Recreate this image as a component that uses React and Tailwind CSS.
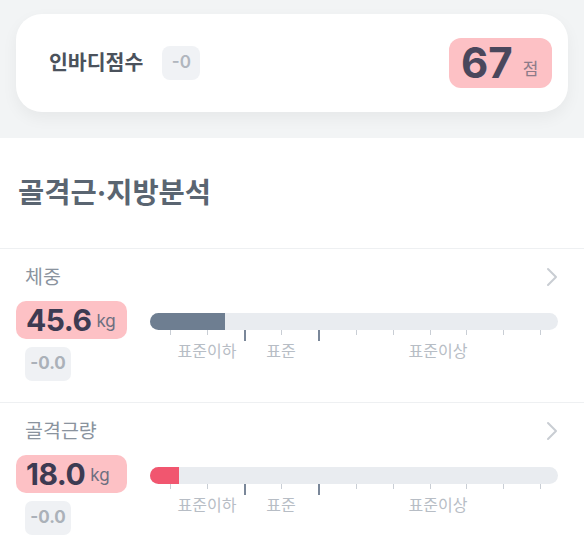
import React from "react";

const rows = [
  { label: "체중", value: "45.6", fill: "w-[75px] bg-[#6e7e91]" },
  { label: "골격근량", value: "18.0", fill: "w-[29px] bg-[#f1566f]" },
];

const ticks = [0, 1, 2, 3, 4, 5, 6, 7, 8, 9, 10];

function Chevron() {
  return (
    <svg width="14" height="20" viewBox="0 0 14 20" fill="none">
      <polyline points="3,2 11,10 3,18" stroke="#c9cdd3" strokeWidth="2" strokeLinecap="round" strokeLinejoin="round" />
    </svg>
  );
}

function Gauge({ fill }) {
  return (
    <div className="ml-[23px] mt-[12px] w-[408px]">
      <div className="h-[17px] rounded-full bg-[#e9ecf0] overflow-hidden">
        <div className={`h-full ${fill}`} />
      </div>
      <div className="flex items-start pl-[20px] gap-[35.8px] h-[11px]">
        {ticks.map((t) =>
          t === 2 || t === 4 ? (
            <div key={t} className="w-[2px] h-[11px] bg-[#7a8799]" />
          ) : (
            <div key={t} className="w-px h-[5px] bg-[#c9ced5]" />
          )
        )}
      </div>
      <div className="flex pl-[20px] text-[16px] leading-[20px] text-[#b7bdc5]">
        <div className="w-[74px] text-center">표준이하</div>
        <div className="w-[74px] text-center">표준</div>
        <div className="flex-1 text-center">표준이상</div>
      </div>
    </div>
  );
}

function Row({ label, value, fill }) {
  return (
    <div className="h-[154px] border-b border-[#eef0f2] px-4 pt-[16px]">
      <div className="flex items-center justify-between pr-[9px]">
        <span className="ml-[9px] text-[19.5px] leading-[24px] text-[#8a939e]">{label}</span>
        <Chevron />
      </div>
      <div className="flex mt-[12px]">
        <div className="w-[111px]">
          <div className="h-[38px] rounded-[10px] bg-[#fdc1c5] px-[10px] flex items-center">
            <span className="text-[30px] font-bold text-[#3d3b52] tracking-[-0.5px]">{value}</span>
            <span className="ml-[5px] mt-[4px] text-[17px] text-[#6d6f80]">kg</span>
          </div>
          <div className="ml-[9px] mt-[8px] w-[46px] h-[34px] rounded-[7px] bg-[#eff1f4] flex items-center justify-center text-[17px] font-bold text-[#abb1b9]">
            -0.0
          </div>
        </div>
        <Gauge fill={fill} />
      </div>
    </div>
  );
}

export default function App() {
  return (
    <div className="w-[584px] h-[548px] overflow-hidden bg-white font-['Inter','Noto_Sans_CJK_KR',sans-serif]">
      <div className="bg-[#f2f4f5] px-4 pt-[14px] pb-[26px]">
        <div className="h-[98px] rounded-[26px] bg-white shadow-[0_6px_16px_rgba(0,0,0,0.05)] flex items-center pl-[33px] pr-4">
          <span className="text-[20.5px] font-semibold text-[#4b525c]">인바디점수</span>
          <span className="ml-[19px] w-[38px] h-[34px] rounded-[8px] bg-[#f0f2f5] flex items-center justify-center text-[17px] font-semibold text-[#b0b6be]">
            -0
          </span>
          <div className="ml-auto w-[103px] h-[50px] rounded-[12px] bg-[#fdc1c5] flex items-center pl-[12px]">
            <span className="text-[42px] font-bold text-[#4a475c] leading-none">67</span>
            <span className="ml-[10px] mt-[14px] text-[17px] text-[#8c7b89]">점</span>
          </div>
        </div>
      </div>
      <div className="h-[111px] border-b border-[#eef0f2] flex items-center px-[18px] text-[28.5px] font-bold text-[#5a6571]">
        골격근·지방분석
      </div>
      {rows.map((r) => (
        <Row key={r.label} {...r} />
      ))}
    </div>
  );
}
